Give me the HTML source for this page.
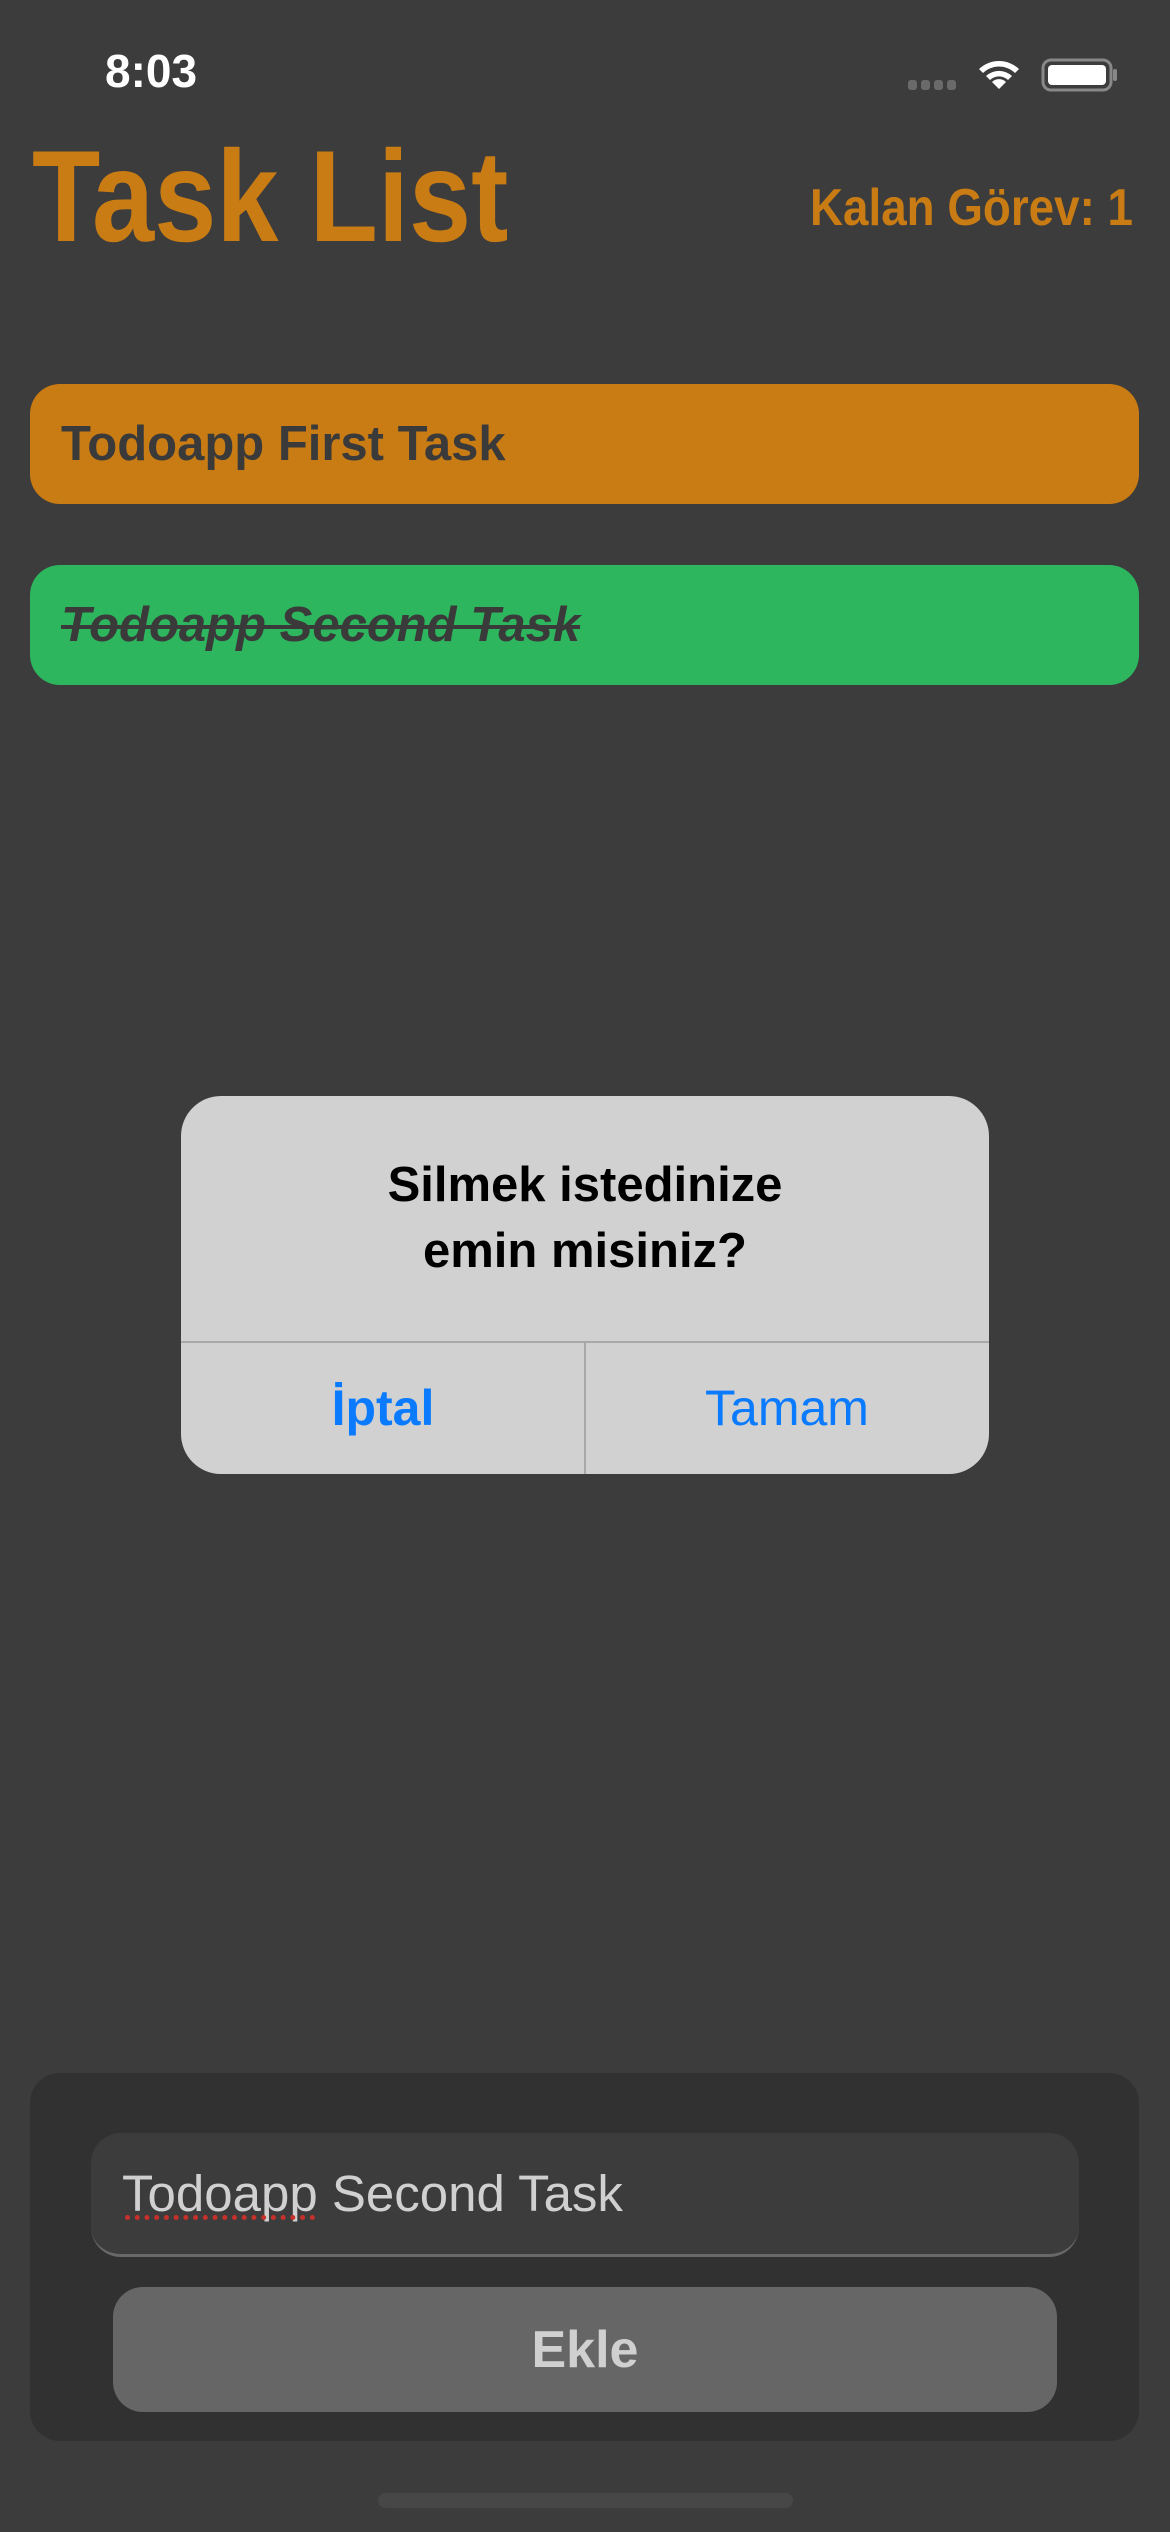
<!DOCTYPE html>
<html><head><meta charset="utf-8"><style>
*{margin:0;padding:0;box-sizing:border-box}
body{width:1170px;height:2532px;background:#3c3c3c;font-family:"Liberation Sans",sans-serif;position:relative;overflow:hidden}
.abs{position:absolute}
.sx{display:inline-block;transform-origin:left center;white-space:nowrap}
.card{position:absolute;left:30px;width:1109px;height:120px;border-radius:30px;display:flex;align-items:center;padding-left:31px;font-size:49px;font-weight:bold;color:#3a3a3a}
</style></head><body>
<div class="abs" style="left:105px;top:44px;font-size:46px;font-weight:bold;color:#fff">8:03</div>
<svg class="abs" style="left:900px;top:55px" width="220" height="40" viewBox="0 0 220 40">
 <g fill="#6a6a6a"><rect x="8" y="25" width="9" height="10" rx="3"/><rect x="21" y="25" width="9" height="10" rx="3"/><rect x="34" y="25" width="9" height="10" rx="3"/><rect x="47" y="25" width="9" height="10" rx="3"/></g>
 <path d="M99 34 L92 27 A10 10 0 0 1 106 27 Z" fill="#fff"/>
 <path d="M86 21 A19 19 0 0 1 112 21 L108 25 A13 13 0 0 0 90 25 Z" fill="#fff"/>
 <path d="M79 14 A29 29 0 0 1 119 14 L115 18 A23 23 0 0 0 83 18 Z" fill="#fff"/>
 <rect x="143" y="5" width="68" height="30" rx="8" fill="none" stroke="#888" stroke-width="3"/>
 <rect x="148" y="10" width="58" height="20" rx="4" fill="#fff"/>
 <rect x="213" y="14" width="4" height="12" rx="2" fill="#888"/>
</svg>
<div class="abs" style="left:32px;top:118px;font-size:130px;font-weight:bold;color:#c97c14;line-height:1.2"><span class="sx" style="transform:scaleX(.86)">Task List</span></div>
<div class="abs" style="left:810px;top:178px;font-size:52px;font-weight:bold;color:#c97c14"><span class="sx" style="transform:scaleX(.88)">Kalan Görev: 1</span></div>
<div class="card" style="top:384px;background:#c97c14">Todoapp First Task</div>
<div class="card" style="top:565px;background:#2db65d;font-style:italic;text-decoration:line-through;text-decoration-thickness:4px">Todoapp Second Task</div>

<div class="abs" style="left:181px;top:1096px;width:808px;height:378px;background:#d0d1d0;border-radius:40px;overflow:hidden">
 <div class="abs" style="left:0;top:56px;width:808px;text-align:center;font-size:49px;font-weight:bold;color:#000;line-height:66px">Silmek istedinize<br>emin misiniz?</div>
 <div class="abs" style="left:0;top:245px;width:808px;height:2px;background:#a8a8a8"></div>
 <div class="abs" style="left:403px;top:246px;width:2px;height:140px;background:#a8a8a8"></div>
 <div class="abs" style="left:0;top:283px;width:404px;text-align:center;font-size:50px;font-weight:bold;color:#0a7aff">İptal</div>
 <div class="abs" style="left:404px;top:283px;width:404px;text-align:center;font-size:50px;color:#0a7aff">Tamam</div>
</div>

<div class="abs" style="left:30px;top:2073px;width:1109px;height:368px;background:#313131;border-radius:30px"></div>
<div class="abs" style="left:91px;top:2133px;width:988px;height:124px;background:#3c3c3c;border-radius:30px;border-bottom:3px solid #686868"></div>
<div class="abs" style="left:122px;top:2164px;font-size:51px;color:#d0d0d0">Todoapp Second Task</div>
<div class="abs" style="left:125px;top:2215px;width:190px;height:0;border-top:5px dotted #c8302a"></div>
<div class="abs" style="left:113px;top:2287px;width:944px;height:125px;background:#666;border-radius:30px;display:flex;align-items:center;justify-content:center;font-size:52px;font-weight:bold;color:#d0d0d0">Ekle</div>
<div class="abs" style="left:378px;top:2493px;width:415px;height:15px;background:#474747;border-radius:8px"></div>
</body></html>
